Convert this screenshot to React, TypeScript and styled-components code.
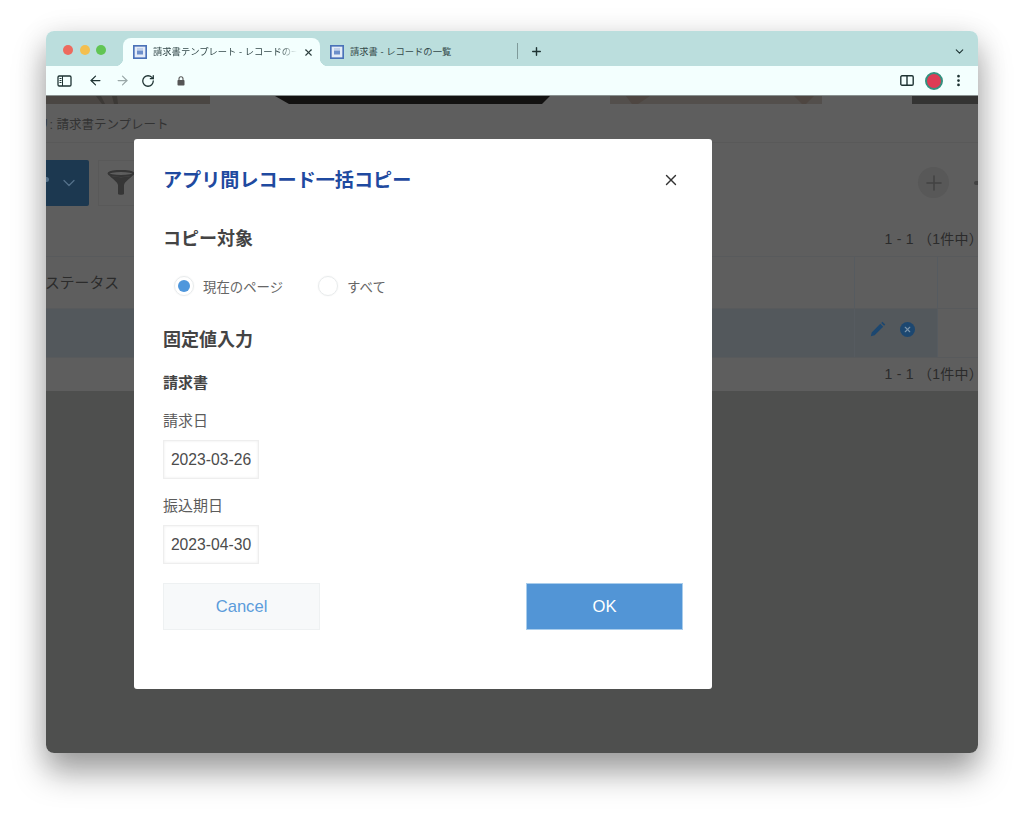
import { FC } from "react";
import styled, { createGlobalStyle } from "styled-components";
import {
  ArrowLeft,
  ArrowRight,
  ChevronDown,
  EllipsisVertical,
  Plus,
  RotateCw,
  X,
} from "lucide-react";

const GlobalStyle = createGlobalStyle`
  html, body {
    margin: 0;
    padding: 0;
    background: #fff;
    font-family: "Liberation Sans", "Noto Sans CJK JP", sans-serif;
  }
  * {
    box-sizing: border-box;
  }
`;

const Desktop = styled.div`
  width: 1024px;
  height: 814px;
  padding: 31px 46px 61px;
  overflow: hidden;
`;

const BrowserWindow = styled.div`
  height: 722px;
  display: flex;
  flex-direction: column;
  border-radius: 8px;
  overflow: hidden;
  box-shadow: 0 20px 32px rgba(0, 0, 0, 0.34), 0 4px 30px rgba(0, 0, 0, 0.12);
`;

const TabStrip = styled.div`
  height: 35px;
  flex: none;
  display: flex;
  align-items: flex-end;
  background: #bbdedd;
`;

const Lights = styled.div`
  width: 77px;
  height: 35px;
  flex: none;
  display: flex;
  align-items: center;
  gap: 6.5px;
  padding: 2px 0 0 17px;
`;

const Light = styled.span<{ $color: string }>`
  width: 10px;
  height: 10px;
  border-radius: 50%;
  background: ${(p) => p.$color};
`;

const Tab = styled.div<{ $active?: boolean }>`
  position: relative;
  width: ${(p) => (p.$active ? "197px" : "196px")};
  height: 28px;
  flex: none;
  display: flex;
  align-items: center;
  padding: 0 0 0 10px;
  gap: 6px;
  border-radius: 8px 8px 0 0;
  background: ${(p) => (p.$active ? "#f3fffe" : "transparent")};
  ${(p) =>
    p.$active &&
    `
    &::before, &::after {
      content: "";
      position: absolute;
      bottom: 0;
      width: 8px;
      height: 8px;
    }
    &::before {
      left: -8px;
      background: radial-gradient(circle at 0 0, transparent 8px, #f3fffe 8.5px);
    }
    &::after {
      right: -8px;
      background: radial-gradient(circle at 100% 0, transparent 8px, #f3fffe 8.5px);
    }
  `}
`;

const Favicon = styled.svg`
  width: 14px;
  height: 14px;
  flex: none;
`;

const TabTitle = styled.span<{ $fade?: boolean }>`
  width: 144px;
  flex: none;
  overflow: hidden;
  white-space: nowrap;
  font-size: 9.3px;
  line-height: 14px;
  color: #34494a;
  ${(p) =>
    p.$fade &&
    `
    -webkit-mask-image: linear-gradient(90deg, #000 88%, transparent 100%);
    mask-image: linear-gradient(90deg, #000 88%, transparent 100%);
  `}
`;

const TabClose = styled.span`
  display: flex;
  color: #2c3e3e;
`;

const StripSide = styled.div`
  flex: 1;
  height: 35px;
  display: flex;
  align-items: center;
  padding: 5px 12px 0 1px;
  color: #1e3333;
`;

const TabDivider = styled.span`
  width: 1px;
  height: 16px;
  background: #7f9a9a;
`;

const NewTab = styled.span`
  display: flex;
  margin-left: 12px;
`;

const TabMenu = styled.span`
  display: flex;
  margin-left: auto;
`;

const Toolbar = styled.div`
  height: 30px;
  flex: none;
  display: flex;
  align-items: center;
  padding: 0 12px 0 11px;
  background: #f3fffe;
  border-bottom: 1px solid #8a9291;
  color: #1e3333;
`;

const ToolIcon = styled.span<{ $left: number; $color?: string }>`
  display: flex;
  margin-left: ${(p) => p.$left}px;
  color: ${(p) => p.$color ?? "inherit"};
`;

const ToolSpacer = styled.span`
  flex: 1;
`;

const Profile = styled.span`
  width: 18px;
  height: 18px;
  margin-left: 11px;
  border-radius: 50%;
  background: #dc3c55;
  border: 2.5px solid #33917f;
`;

const Content = styled.div`
  position: relative;
  flex: 1;
  overflow: hidden;
  background: #4e4f4e;
`;

const Page = styled.div`
  height: 295px;
  background: #5e5e5e;
  color: #2b2b2b;
`;

const BannerArt = styled.svg`
  display: block;
  width: 100%;
  height: 8px;
`;

const Breadcrumb = styled.div`
  height: 39px;
  display: flex;
  align-items: center;
  margin-left: -9px;
  font-size: 12.5px;
  color: #333;
  border-bottom: 1px solid #595959;
`;

const ActionBar = styled.div`
  height: 80px;
  display: flex;
  align-items: flex-start;
  padding-top: 17px;
  overflow: hidden;
`;

const ViewSelect = styled.div`
  position: relative;
  width: 43px;
  height: 46px;
  display: flex;
  align-items: center;
  justify-content: flex-end;
  padding-right: 10px;
  background: #1c3850;
  border-radius: 0 2px 2px 0;
  color: #54718a;
  &::before {
    content: "";
    position: absolute;
    left: -2px;
    top: 17px;
    width: 5px;
    height: 5px;
    border-radius: 50%;
    background: #54718a;
  }
`;

const FilterButton = styled.div`
  width: 46px;
  height: 46px;
  margin-left: 9px;
  display: flex;
  align-items: center;
  justify-content: center;
  border: 1px solid #595959;
`;

const Funnel = styled.svg`
  width: 28px;
  height: 26px;
`;

const ActionSpacer = styled.span`
  flex: 1;
`;

const RoundButton = styled.div`
  width: 31px;
  height: 31px;
  margin-top: 7px;
  display: flex;
  align-items: center;
  justify-content: center;
  border-radius: 50%;
  background: #585858;
  color: #424242;
`;

const ClippedDots = styled.div`
  width: 4px;
  height: 4px;
  margin: 21px 0 0 25px;
  border-radius: 2px 0 0 2px;
  background: #424242;
`;

const Pager = styled.div<{ $height: number }>`
  height: ${(p) => p.$height}px;
  display: flex;
  align-items: center;
  justify-content: flex-end;
  padding-bottom: 4px;
  margin-right: -5px;
  font-size: 14px;
  letter-spacing: 0.25px;
  white-space: pre;
  color: #2b2b2b;
`;

const Table = styled.div`
  border-top: 1px solid #585a5c;
`;

const Row = styled.div<{ $height: number }>`
  height: ${(p) => p.$height}px;
  display: grid;
  grid-template-columns: 808px 84px 40px;
  border-bottom: 1px solid #585a5c;
`;

const MainCell = styled.div<{ $selected?: boolean }>`
  display: flex;
  align-items: center;
  padding-bottom: 2px;
  margin-left: -1px;
  font-size: 14.8px;
  color: #2b2b2b;
  background: ${(p) => (p.$selected ? "#53585c" : "transparent")};
`;

const ActionCell = styled.div<{ $selected?: boolean }>`
  display: flex;
  align-items: center;
  gap: 14px;
  padding: 0 0 8px 15px;
  border-left: 1px solid #565b60;
  border-right: 1px solid #565b60;
  color: #1c4770;
  background: ${(p) => (p.$selected ? "#53585c" : "transparent")};
`;

const PencilIcon = styled.svg`
  width: 16px;
  height: 16px;
  flex: none;
`;

const DeleteIcon = styled.span`
  width: 15px;
  height: 15px;
  display: flex;
  align-items: center;
  justify-content: center;
  border-radius: 50%;
  background: #1c4770;
  color: #7a94aa;
`;

const Dialog = styled.div`
  position: absolute;
  top: 43px;
  left: 88px;
  width: 578px;
  height: 550px;
  padding: 0 29px;
  background: #fff;
  border-radius: 3px;
  color: #3a3a3a;
`;

const DialogHeader = styled.div`
  height: 82px;
  display: flex;
  align-items: center;
  justify-content: space-between;
  padding: 0 3px 2px 0;
  color: #333;
`;

const DialogTitle = styled.h2`
  margin: 0;
  font-size: 19.1px;
  font-weight: 700;
  color: #1f4aa0;
`;

const CloseButton = styled.span`
  display: flex;
  margin-top: 2px;
`;

const SectionTitle = styled.h3<{ $top: number }>`
  margin: ${(p) => p.$top}px 0 0;
  font-size: 18px;
  line-height: 24px;
  font-weight: 700;
  color: #444;
`;

const RadioGroup = styled.div`
  height: 22px;
  margin-top: 24px;
  display: flex;
  align-items: center;
  padding-left: 11px;
`;

const RadioOption = styled.label`
  display: flex;
  align-items: center;
  gap: 9px;
  margin-right: 35px;
  font-size: 13.4px;
  color: #666;
`;

const RadioMark = styled.span<{ $checked?: boolean }>`
  width: 20px;
  height: 20px;
  display: flex;
  align-items: center;
  justify-content: center;
  border-radius: 50%;
  border: 1px solid #e8ebec;
  box-shadow: 0 0 2px rgba(0, 0, 0, 0.06);
  &::after {
    content: "";
    width: 12px;
    height: 12px;
    border-radius: 50%;
    background: ${(p) => (p.$checked ? "#4f97dc" : "transparent")};
  }
`;

const GroupTitle = styled.div`
  margin-top: 19px;
  font-size: 15px;
  line-height: 24px;
  font-weight: 700;
  color: #444;
`;

const FieldLabel = styled.div<{ $top: number }>`
  margin-top: ${(p) => p.$top}px;
  font-size: 15px;
  line-height: 22px;
  color: #5c5c5c;
`;

const DateInput = styled.div`
  width: 96px;
  height: 39px;
  margin-top: 8px;
  display: flex;
  align-items: center;
  justify-content: center;
  font-size: 15.7px;
  color: #4c4c4c;
  background: #fff;
  border: 1px solid #eeeeee;
  box-shadow: inset 0 0 3px rgba(0, 0, 0, 0.08);
`;

const DialogFooter = styled.div`
  margin-top: 19px;
  display: flex;
  justify-content: space-between;
`;

const FooterButton = styled.button<{ $primary?: boolean }>`
  width: 157px;
  height: 47px;
  padding: 0;
  font-family: inherit;
  font-size: 16.6px;
  border: 1px solid ${(p) => (p.$primary ? "#a9cdec" : "#eef1f2")};
  background: ${(p) => (p.$primary ? "#5295d6" : "#f7f9fa")};
  color: ${(p) => (p.$primary ? "#fff" : "#5b9cdb")};
`;

const SheetIcon: FC = () => (
  <Favicon viewBox="0 0 14 14">
    <rect x="0.8" y="0.8" width="12.4" height="12.4" fill="#e4ecf7" stroke="#4a72b8" strokeWidth="1.7" />
    <rect x="4" y="5.5" width="6" height="4" fill="#6d8fca" />
    <rect x="4" y="3.5" width="6" height="1" fill="#9db5dd" />
  </Favicon>
);

const App: FC = () => {
  return (
    <Desktop>
      <GlobalStyle />
      <BrowserWindow>
        <TabStrip>
          <Lights>
            <Light $color="#ed6a5e" />
            <Light $color="#f4bf4f" />
            <Light $color="#61c554" />
          </Lights>
          <Tab $active>
            <SheetIcon />
            <TabTitle $fade>請求書テンプレート - レコードの一覧</TabTitle>
            <TabClose>
              <X size={11} strokeWidth={2.4} />
            </TabClose>
          </Tab>
          <Tab>
            <SheetIcon />
            <TabTitle>請求書 - レコードの一覧</TabTitle>
          </Tab>
          <StripSide>
            <TabDivider />
            <NewTab>
              <Plus size={13} strokeWidth={2.6} />
            </NewTab>
            <TabMenu>
              <ChevronDown size={13} strokeWidth={2} />
            </TabMenu>
          </StripSide>
        </TabStrip>

        <Toolbar>
          <ToolIcon $left={0}>
            <svg width="15" height="12" viewBox="0 0 15 12" fill="none" stroke="currentColor">
              <rect x="1" y="1" width="13" height="10" rx="1.2" strokeWidth="1.3" />
              <path d="M2.5 3.5h2M2.5 5.5h2M2.5 7.5h2" strokeWidth="1" />
              <path d="M5.5 1v10" strokeWidth="1" />
            </svg>
          </ToolIcon>
          <ToolIcon $left={16}>
            <ArrowLeft size={15} strokeWidth={2} />
          </ToolIcon>
          <ToolIcon $left={12} $color="#9aa8a8">
            <ArrowRight size={15} strokeWidth={2} />
          </ToolIcon>
          <ToolIcon $left={11}>
            <RotateCw size={14} strokeWidth={2.2} />
          </ToolIcon>
          <ToolIcon $left={22} $color="#555">
            <svg width="8" height="10" viewBox="0 0 8 10">
              <path d="M2 4.2V2.8a2 2 0 0 1 4 0v1.4" fill="none" stroke="currentColor" strokeWidth="1.1" />
              <rect x="0.5" y="4" width="7" height="5.5" rx="0.8" fill="currentColor" />
            </svg>
          </ToolIcon>
          <ToolSpacer />
          <ToolIcon $left={0}>
            <svg width="14" height="11" viewBox="0 0 14 11" fill="none" stroke="currentColor" strokeWidth="1.4">
              <rect x="0.8" y="0.8" width="12.4" height="9.4" rx="1.2" />
              <path d="M7 1v9" />
            </svg>
          </ToolIcon>
          <Profile />
          <ToolIcon $left={8}>
            <EllipsisVertical size={15} strokeWidth={2.4} />
          </ToolIcon>
        </Toolbar>

        <Content>
          <Page>
            <BannerArt viewBox="0 0 932 8" preserveAspectRatio="none">
              <rect x="0" y="0" width="164" height="8" fill="#4a4643" />
              <path d="M50 0l6 8h3l-4-8zM66 0l2 8h4l-1-8z" fill="#3c3936" />
              <polygon points="229,0 504,0 496,8 243,8" fill="#131211" />
              <rect x="564" y="0" width="212" height="8" fill="#534f4c" />
              <path d="M580 0h24l-12 8h-6zM748 0h20l-8 8h-4z" fill="#4e4641" />
              <rect x="866" y="0" width="66" height="8" fill="#343433" />
            </BannerArt>
            <Breadcrumb>リ: 請求書テンプレート</Breadcrumb>
            <ActionBar>
              <ViewSelect>
                <ChevronDown size={20} strokeWidth={1.5} />
              </ViewSelect>
              <FilterButton>
                <Funnel viewBox="0 0 28 26">
                  <ellipse cx="14" cy="3.5" rx="12.5" ry="2.6" fill="none" stroke="#363636" strokeWidth="2" />
                  <path d="M2 5c3 4 8 6 9 10v9c0 1 6 1 6 0v-9c1-4 6-6 9-10-6 3-18 3-24 0z" fill="#363636" />
                </Funnel>
              </FilterButton>
              <ActionSpacer />
              <RoundButton>
                <Plus size={24} strokeWidth={1.5} />
              </RoundButton>
              <ClippedDots />
            </ActionBar>
            <Pager $height={33}>{"1 - 1 （1件中）"}</Pager>
            <Table>
              <Row $height={52}>
                <MainCell>ステータス</MainCell>
                <ActionCell />
              </Row>
              <Row $height={49}>
                <MainCell $selected />
                <ActionCell $selected>
                  <PencilIcon viewBox="0 0 16 16">
                    <path d="M0.8 15.2l0.9-3.8 8.6-8.6 2.9 2.9-8.6 8.6zM11.2 1.9l1.2-1.2 2.9 2.9-1.2 1.2z" fill="currentColor" />
                  </PencilIcon>
                  <DeleteIcon>
                    <X size={9} strokeWidth={3} />
                  </DeleteIcon>
                </ActionCell>
              </Row>
            </Table>
            <Pager $height={34}>{"1 - 1 （1件中）"}</Pager>
          </Page>

          <Dialog>
            <DialogHeader>
              <DialogTitle>アプリ間レコード一括コピー</DialogTitle>
              <CloseButton>
                <X size={18} strokeWidth={1.8} />
              </CloseButton>
            </DialogHeader>
            <SectionTitle $top={6}>コピー対象</SectionTitle>
            <RadioGroup>
              <RadioOption>
                <RadioMark $checked />
                現在のページ
              </RadioOption>
              <RadioOption>
                <RadioMark />
                すべて
              </RadioOption>
            </RadioGroup>
            <SectionTitle $top={31}>固定値入力</SectionTitle>
            <GroupTitle>請求書</GroupTitle>
            <FieldLabel $top={15}>請求日</FieldLabel>
            <DateInput>2023-03-26</DateInput>
            <FieldLabel $top={16}>振込期日</FieldLabel>
            <DateInput>2023-04-30</DateInput>
            <DialogFooter>
              <FooterButton>Cancel</FooterButton>
              <FooterButton $primary>OK</FooterButton>
            </DialogFooter>
          </Dialog>
        </Content>
      </BrowserWindow>
    </Desktop>
  );
};

export default App;
